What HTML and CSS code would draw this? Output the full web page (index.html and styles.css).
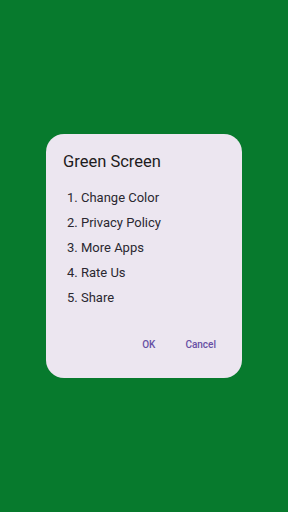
FILE: index.html
```html
<!DOCTYPE html>
<html lang="en">
<head>
    <meta charset="UTF-8">
    <meta name="viewport" content="width=device-width, initial-scale=1.0">
    <title>Green Screen</title>
    <link rel="stylesheet" href="styles.css">
</head>
<body>
    <div class="dialog">
        <h1 class="dialog-title">Green Screen</h1>
        <ul class="menu-list">
            <li>1. Change Color</li>
            <li>2. Privacy Policy</li>
            <li>3. More Apps</li>
            <li>4. Rate Us</li>
            <li>5. Share</li>
        </ul>
        <div class="actions">
            <button class="btn">OK</button>
            <button class="btn">Cancel</button>
        </div>
    </div>
</body>
</html>
```

FILE: styles.css
```css
:root {
    --green: #077a2d;
    --surface: #ece6f0;
    --text: #1d1b20;
    --primary: #6750a4;
}

* {
    margin: 0;
    padding: 0;
    box-sizing: border-box;
}

html, body {
    height: 100%;
}

body {
    font-family: Roboto, "Liberation Sans", sans-serif;
    background: var(--green);
    display: flex;
    align-items: center;
    justify-content: center;
}

.dialog {
    width: 196px;
    height: 244px;
    background: var(--surface);
    border-radius: 18px;
    padding: 18px 17px 0 17px;
    display: flex;
    flex-direction: column;
}

.dialog-title {
    font-size: 16.5px;
    font-weight: 400;
    color: var(--text);
    line-height: 20px;
}

.menu-list {
    list-style: none;
    margin-top: 13px;
    padding-left: 4px;
}

.menu-list li {
    font-size: 13px;
    line-height: 25px;
    color: #2a2830;
}

.actions {
    display: flex;
    justify-content: flex-end;
    gap: 30px;
    margin-top: 28px;
    padding-right: 9px;
}

.btn {
    background: none;
    border: none;
    font-family: inherit;
    font-size: 10px;
    font-weight: 500;
    color: var(--primary);
    line-height: 14px;
    cursor: pointer;
}
```
